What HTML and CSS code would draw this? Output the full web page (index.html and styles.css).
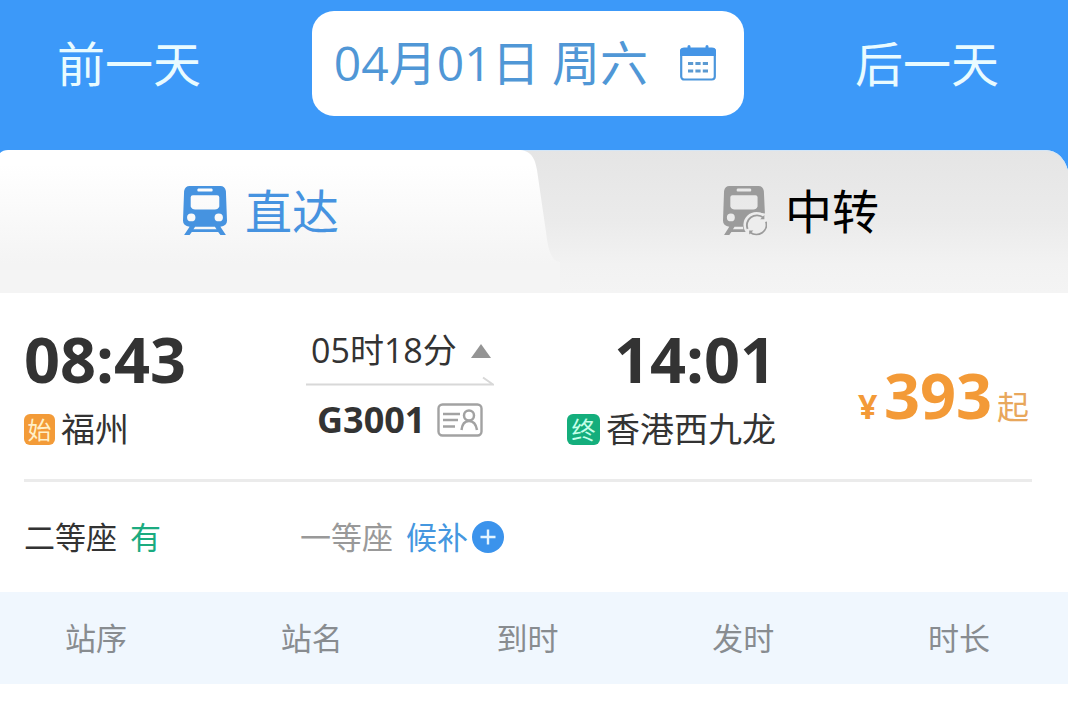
FILE: index.html
```html
<!DOCTYPE html>
<html lang="zh-CN">
<head>
<meta charset="utf-8">
<meta name="viewport" content="width=device-width, initial-scale=1.0">
<title>车票查询</title>
<link rel="stylesheet" href="styles.css">
</head>
<body>
<header class="date-bar">
  <button type="button" class="day-btn">前一天</button>
  <button type="button" class="date-btn">
    04月01日 周六
    <svg class="icon-calendar" viewBox="0 0 36 36" aria-hidden="true">
      <rect x="1.2" y="3.5" width="33.6" height="31" rx="3" fill="none" stroke="#4b96dc" stroke-width="2.200"/>
      <path d="M0 11V6q0-3 3-3h30q3 0 3 3v5z" fill="#4595e6"/>
      <path d="M9 1.500v3M27 1.500v3" stroke="#4595e6" stroke-width="3" stroke-linecap="round"/>
      <path d="M8 18.500h20M8 26h20" stroke="#5b9ad2" stroke-width="3" stroke-dasharray="5.200 2.200"/>
    </svg>
  </button>
  <button type="button" class="day-btn">后一天</button>
</header>

<nav class="tabs">
  <svg class="tabs-bg" viewBox="0 0 1068 143" preserveAspectRatio="none" aria-hidden="true">
    <defs>
      <linearGradient id="tabOn" x1="0" y1="0" x2="0" y2="143" gradientUnits="userSpaceOnUse">
        <stop offset="0.1" stop-color="#ffffff"/>
        <stop offset="0.8" stop-color="#f4f4f4"/>
      </linearGradient>
      <linearGradient id="tabOff" x1="0" y1="0" x2="0" y2="143" gradientUnits="userSpaceOnUse">
        <stop offset="0" stop-color="#e5e5e5"/>
        <stop offset="0.5" stop-color="#ebebeb"/>
        <stop offset="0.8" stop-color="#f2f2f2"/>
        <stop offset="1" stop-color="#f4f4f4"/>
      </linearGradient>
    </defs>
    <path d="M500 0H1046Q1062 1 1068 20V143H500z" fill="url(#tabOff)"/>
    <path d="M520 .5H1046Q1062 1 1067.500 20" fill="none" stroke="#d3e6f8"/>
    <path d="M0 3Q3 0 8 0H518C531 0 535 8 537 20L546 82Q549 112 560 112V143H0z" fill="url(#tabOn)"/>
  </svg>
  <a href="#direct" class="tab active">
    <svg class="icon-train" viewBox="2 1 40 49" preserveAspectRatio="none" aria-hidden="true">
      <path fill="currentColor" fill-rule="evenodd" d="M8 1h28q4 0 5 5l1 29q0 5-6 6l5 8h-5l-2-3H10l-2 3H3l5-8q-6-1-6-6L3 6q1-5 5-5zM16 3.500q-1 0-1 1.500t1 1.500h12q1 0 1-1.500t-1-1.500zM11 10q-2 0-2 2v9q1 3 4 3h18q3 0 4-3v-9q0-2-2-2zM9.500 28a3.800 3.800 0 100 7.600 3.800 3.800 0 000-7.600zM34.500 28a3.800 3.800 0 100 7.600 3.800 3.800 0 000-7.600zM13 41l-1.500 2.500h21L31 41z"/>
    </svg>
    <span>直达</span>
  </a>
  <a href="#transfer" class="tab">
    <svg class="icon-train" viewBox="2 1 42 49" preserveAspectRatio="none" aria-hidden="true">
      <path fill="#9b9b9b" fill-rule="evenodd" d="M8 1h28q4 0 5 5l1 22q-18-4-19 14l2 4H10l-2 3H3l5-8q-6-1-6-6L3 6q1-5 5-5zM16 3.500q-1 0-1 1.500t1 1.500h12q1 0 1-1.500t-1-1.500zM11 10q-2 0-2 2v9q1 3 4 3h18q3 0 4-3v-9q0-2-2-2zM9.500 28a3.800 3.800 0 100 7.600 3.800 3.800 0 000-7.600zM13 41l-1.500 2.500h10L21 41z"/>
      <circle cx="34" cy="39" r="12.500" fill="#ededed"/>
      <path d="M25.500 43a9.600 9.600 0 0115-11M43 36a9.600 9.600 0 01-15 10.500" fill="none" stroke="#9b9b9b" stroke-width="1.800"/>
      <path d="M41.500 29.500v4h-4zM27 48.500v-4h4z" fill="#9b9b9b"/>
    </svg>
    <span>中转</span>
  </a>
</nav>

<main>
  <section class="train">
    <div class="trip">
      <div class="stop">
        <div class="time">08:43</div>
        <div class="station"><span class="badge badge-start">始</span>福州</div>
      </div>
      <div class="ride">
        <button type="button" class="duration">05时18分<svg class="icon-up" viewBox="0 0 20 14" aria-hidden="true"><path d="M10 0l10 14H0z" fill="#949494"/></svg></button>
        <svg class="arrow" viewBox="0 0 188 10" aria-hidden="true"><path d="M0 8.500H187L177 1.500" fill="none" stroke="#d8d8d8" stroke-width="2"/></svg>
        <div class="number">G3001
          <svg class="icon-card" viewBox="0 0 46 34" aria-hidden="true">
            <g fill="none" stroke="#a2a2a2">
              <rect x="1.500" y="1.500" width="43" height="31" rx="4" stroke-width="2.400"/>
              <path d="M6 11h17M6 17h15M6 23.500h12" stroke-width="2.500"/>
              <circle cx="32" cy="12.500" r="5" stroke-width="2.500"/>
              <path d="M24.500 27q1-9 7.500-9t8 9" stroke-width="2.500"/>
            </g>
          </svg>
        </div>
      </div>
      <div class="stop stop-end">
        <div class="time">14:01</div>
        <div class="station"><span class="badge badge-end">终</span>香港西九龙</div>
      </div>
      <div class="price"><span class="yen">¥</span><strong>393</strong><span class="from">起</span></div>
    </div>
    <div class="seats">
      <div class="seat">二等座 <span class="has">有</span></div>
      <div class="seat seat-none">一等座 <a href="#waitlist" class="wait">候补<svg class="icon-plus" viewBox="0 0 32 32" aria-hidden="true"><circle cx="16" cy="16" r="16" fill="#3b93ec"/><path d="M16 8.500v15M8.500 16h15" stroke="#e4f5ff" stroke-width="2.400"/></svg></a></div>
    </div>
  </section>

  <table class="stops">
    <thead>
      <tr>
        <th scope="col">站序</th>
        <th scope="col">站名</th>
        <th scope="col">到时</th>
        <th scope="col">发时</th>
        <th scope="col">时长</th>
      </tr>
    </thead>
  </table>
</main>
</body>
</html>
```

FILE: styles.css
```css
* {
  box-sizing: border-box;
}
body {
  margin: 0;
  background: #fff;
  color: #333;
  font-family: "Open Sans", "Noto Sans CJK SC", sans-serif;
}
button {
  margin: 0;
  padding: 0;
  border: none;
  background: none;
  color: inherit;
  font: inherit;
  cursor: pointer;
}
a {
  color: inherit;
  text-decoration: none;
}
svg {
  display: block;
  flex: none;
}

/* date bar */
.date-bar {
  display: flex;
  justify-content: space-between;
  align-items: center;
  padding: 11px 69px 34px 57px;
  background: #3c99f9;
}
.day-btn {
  color: #e9fbff;
  font-size: 48px;
  line-height: 72px;
}
.date-btn {
  display: flex;
  align-items: center;
  gap: 32px;
  height: 105px;
  padding: 0 28px 2px 22px;
  border-radius: 22px;
  background: #fff;
  color: #5097d6;
  font-size: 48px;
  line-height: 72px;
}
.icon-calendar {
  width: 36px;
  height: 36px;
}

/* tabs */
.tabs {
  position: relative;
  display: flex;
  height: 143px;
  background: #3c99f9;
}
.tabs-bg {
  position: absolute;
  inset: 0;
  width: 100%;
  height: 100%;
}
.tab {
  position: relative;
  width: 50%;
  display: flex;
  justify-content: center;
  align-items: center;
  gap: 18px;
  padding-bottom: 22px;
  color: #000;
  font-size: 47px;
  line-height: 72px;
}
.tab.active {
  padding-right: 12px;
  color: #4693e0;
}
.icon-train {
  width: 44px;
  height: 50px;
}

/* train */
.train {
  padding: 32px 36px 0 24px;
}
.trip {
  display: grid;
  grid-template-columns: 282fr 261fr 291fr 174fr;
  padding-bottom: 26px;
  border-bottom: 3px solid #ebebeb;
}
.stop-end {
  width: max-content;
  text-align: right;
}
.time {
  font-size: 63px;
  font-weight: 700;
  line-height: 68px;
}
.station {
  display: flex;
  align-items: center;
  gap: 6px;
  margin-top: 12px;
  font-size: 34px;
  line-height: 48px;
}
.badge {
  width: 31px;
  height: 31px;
  border-radius: 6px;
  font-size: 24px;
  line-height: 31px;
  text-align: center;
}
.badge-start {
  background: #f39b38;
  color: #fff0c8;
}
.badge-end {
  width: 33px;
  background: #14ae7c;
  color: #c4ffe9;
}
.ride {
  width: 188px;
}
.duration {
  display: flex;
  align-items: center;
  gap: 14px;
  padding-left: 5px;
  font-size: 34px;
  line-height: 51px;
}
.icon-up {
  width: 20px;
  height: 14px;
}
.arrow {
  width: 188px;
  height: 10px;
}
.number {
  display: flex;
  align-items: center;
  gap: 12px;
  padding-left: 11px;
  margin-top: 10px;
  font-size: 36px;
  font-weight: 700;
  line-height: 48px;
}
.icon-card {
  width: 46px;
  height: 34px;
}
.price {
  display: flex;
  align-items: baseline;
  padding-top: 36px;
  color: #f39a37;
  white-space: nowrap;
}
.price strong {
  font-size: 63px;
  line-height: 68px;
}
.yen {
  width: 26px;
  font-size: 34px;
  font-weight: 700;
}
.from {
  margin-left: 5px;
  color: #e8a75c;
  font-size: 32px;
}
.seats {
  display: grid;
  grid-template-columns: 276fr 732fr;
  padding: 30px 0;
  font-size: 31px;
  line-height: 50px;
}
.seat {
  display: flex;
  gap: 13px;
}
.seat-none {
  color: #999;
}
.has {
  color: #1bab80;
}
.wait {
  display: flex;
  align-items: center;
  gap: 4px;
  color: #4597df;
}
.icon-plus {
  width: 32px;
  height: 32px;
}

/* stops */
.stops {
  width: 100%;
  border-collapse: collapse;
  table-layout: fixed;
  background: #f0f7fe;
}
.stops th {
  width: 20.2%;
  padding: 21px 0 21px 65px;
  color: #888c90;
  font-size: 31px;
  font-weight: 400;
  line-height: 50px;
  text-align: left;
}
.stops th:last-child {
  width: auto;
}
```
